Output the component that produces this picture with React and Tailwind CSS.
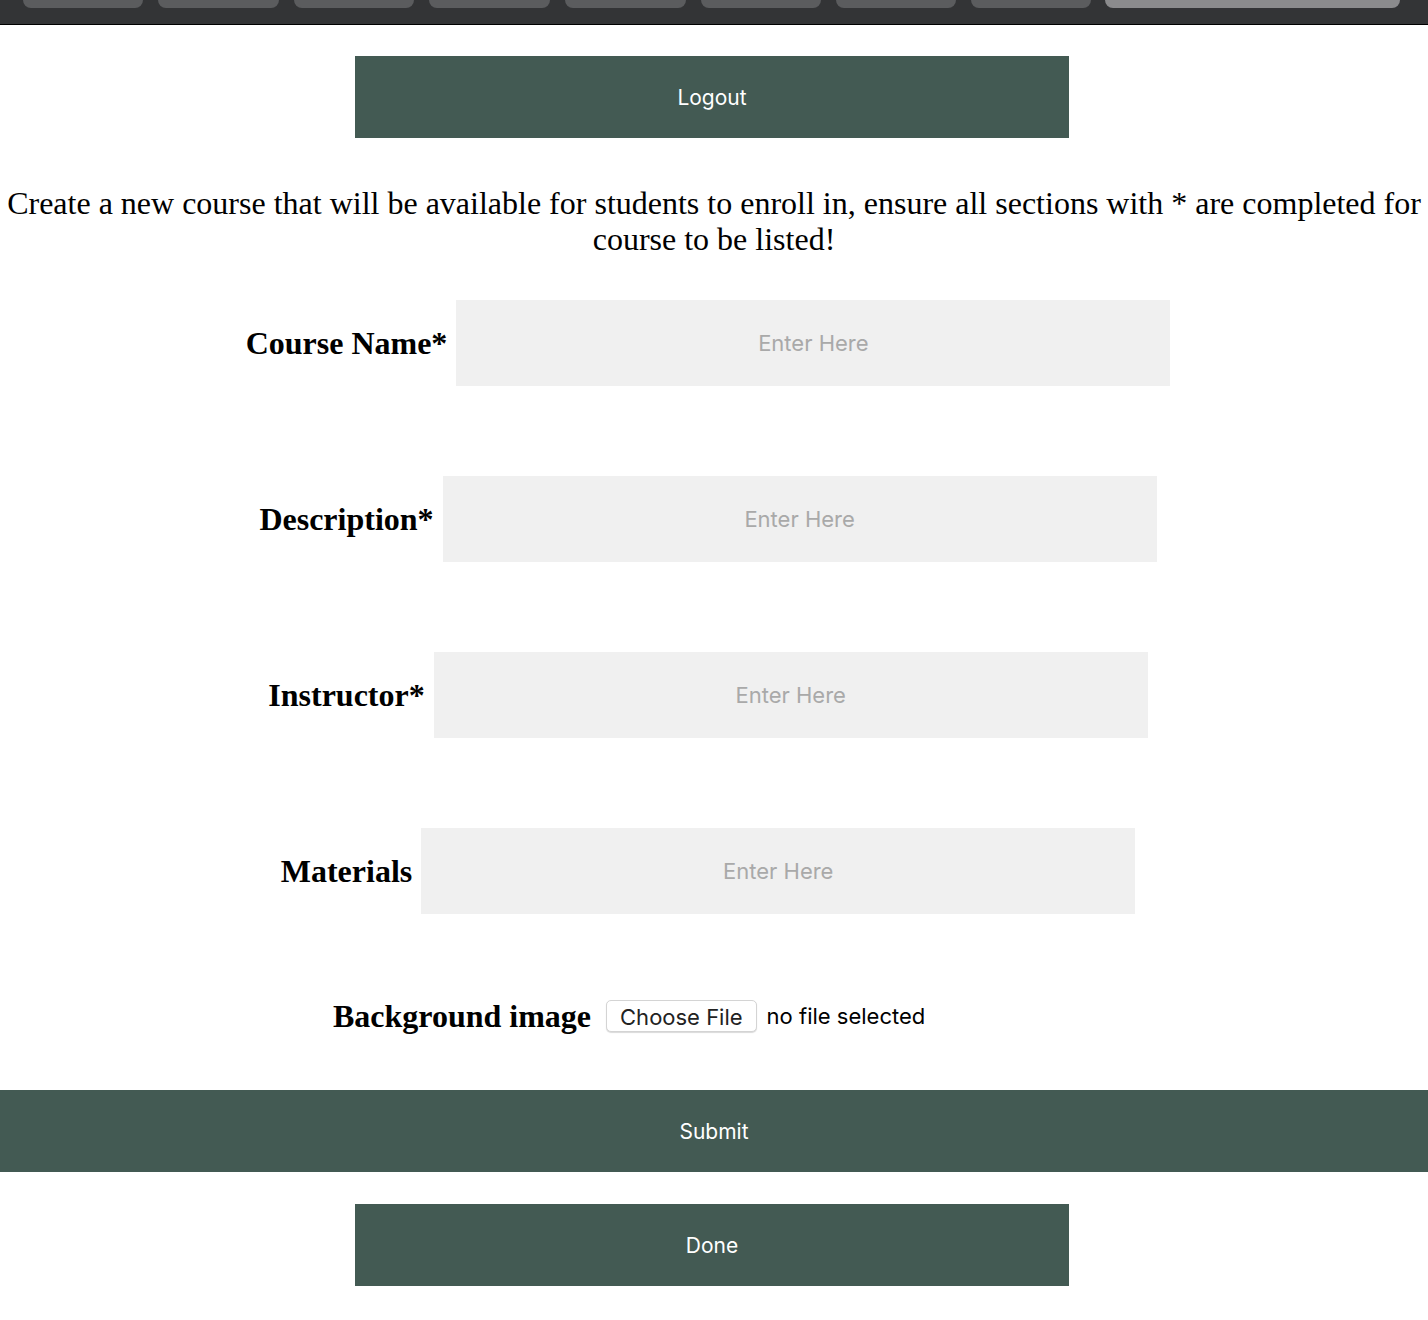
const tabs = [
  "w-[120px]",
  "w-[121px]",
  "w-[120px]",
  "w-[121px]",
  "w-[121px]",
  "w-[120px]",
  "w-[120px]",
  "w-[120px]",
];

const fields = [
  { label: "Course Name*" },
  { label: "Description*" },
  { label: "Instructor*" },
  { label: "Materials" },
];

const sans = "font-['Inter','Liberation_Sans',sans-serif]";
const serif = "font-['Liberation_Serif','Times_New_Roman',serif]";

const App = () => {
  return (
    <div className="min-h-[1320px] bg-white">
      {/* browser tab strip */}
      <div className="h-[25px] bg-[#333436] border-b border-black flex items-start pl-[23px] gap-[15px]">
        {tabs.map((w, i) => (
          <div key={i} className={`${w} h-[8px] rounded-b-[8px] bg-[#5b5c5e]`}></div>
        ))}
        <div className="w-[295px] h-[8px] rounded-b-[8px] bg-[#8b8b8d] -ml-[1px]"></div>
      </div>

      <div className="flex justify-center pt-[31px] pr-[4px]">
        <button className={`w-[714px] h-[82px] pt-[2px] bg-[#435a53] text-white text-[21px] ${sans}`}>
          Logout
        </button>
      </div>

      <p className={`mt-[47px] text-center text-[32px] leading-[36px] text-black ${serif}`}>
        Create a new course that will be available for students to enroll in, ensure all sections with * are completed for course to be listed!
      </p>

      <div className="mt-[43px] flex flex-col gap-[90px]">
        {fields.map((f) => (
          <div key={f.label} className="flex justify-center items-center gap-[9px] pr-[12px]">
            <label className={`text-[32px] font-bold text-black ${serif}`}>{f.label}</label>
            <input
              type="text"
              placeholder="Enter Here"
              className={`w-[714px] h-[86px] bg-[#f0f0f0] text-center text-[22px] placeholder:text-[#a9a9a9] outline-none ${sans}`}
            />
          </div>
        ))}
      </div>

      <div className="mt-[78px] flex justify-center items-center gap-[15px]">
        <label className={`text-[32px] font-bold text-black ${serif}`}>Background image</label>
        <div className={`w-[489px] flex items-center gap-[10px] text-[22px] text-black ${sans}`}>
          <button className="h-[32px] px-[13px] bg-white border border-[#d4d4d4] rounded-[5px] shadow-[0_1px_1px_rgba(0,0,0,0.15)] text-[#222]">
            Choose File
          </button>
          <span>no file selected</span>
        </div>
      </div>

      <button className={`mt-[50px] w-full h-[82px] pt-[2px] bg-[#435a53] text-white text-[21px] ${sans}`}>
        Submit
      </button>

      <div className="flex justify-center mt-[32px] pr-[4px]">
        <button className={`w-[714px] h-[82px] pt-[2px] bg-[#435a53] text-white text-[21px] ${sans}`}>
          Done
        </button>
      </div>
    </div>
  );
};

export default App;
